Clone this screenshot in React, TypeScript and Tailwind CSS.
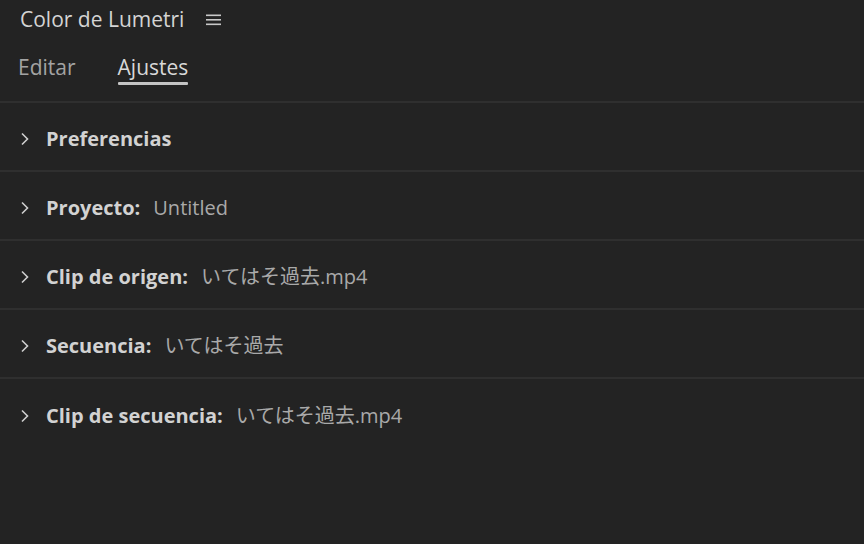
const rows = [
  { label: "Preferencias", value: "" },
  { label: "Proyecto:", value: "Untitled" },
  { label: "Clip de origen:", value: "いてはそ過去.mp4" },
  { label: "Secuencia:", value: "いてはそ過去" },
  { label: "Clip de secuencia:", value: "いてはそ過去.mp4" },
]

function Chevron() {
  return (
    <svg width="10" height="14" viewBox="0 0 10 14" className="shrink-0">
      <polyline points="2,1.5 7.5,7 2,12.5" fill="none" stroke="#cfcfcf" strokeWidth="1.6" />
    </svg>
  )
}

function Hamburger() {
  return (
    <svg width="18" height="14" viewBox="0 0 18 14">
      <rect x="1" y="1.5" width="15" height="1.6" fill="#c8c8c8" />
      <rect x="1" y="6" width="15" height="1.6" fill="#c8c8c8" />
      <rect x="1" y="10.5" width="15" height="1.6" fill="#c8c8c8" />
    </svg>
  )
}

export default function App() {
  return (
    <div
      className="w-[864px] h-[544px] bg-[#232323] overflow-hidden"
      style={{ fontFamily: '"Open Sans", "Noto Sans CJK JP", sans-serif' }}
    >
      <div className="h-[40px] flex items-center pl-[20px] gap-[21px]">
        <span className="text-[21px] text-[#d4d4d4]">Color de Lumetri</span>
        <Hamburger />
      </div>

      <div className="h-[63px] flex items-start pl-[18px] gap-[42px] border-b-2 border-[#2f2f2f]">
        <div className="pt-[14px] flex flex-col">
          <span className="text-[21px] leading-[27px] text-[#a3a3a3]">Editar</span>
        </div>
        <div className="pt-[14px] flex flex-col">
          <span className="text-[21px] leading-[27px] text-[#d8d8d8]">Ajustes</span>
          <div className="mt-[1px] h-[3px] bg-[#c4c4c4] rounded-[1px]" />
        </div>
      </div>

      {rows.map((r) => (
        <div key={r.label} className="h-[69px] flex items-center pl-[20px] pt-[4px] border-b-2 border-[#2f2f2f] last:border-b-0">
          <Chevron />
          <span className="ml-[16px] text-[20px] font-bold text-[#d2d2d2]">{r.label}</span>
          {r.value && <span className="ml-[13px] text-[20px] text-[#a9a9a9]">{r.value}</span>}
        </div>
      ))}
    </div>
  )
}
